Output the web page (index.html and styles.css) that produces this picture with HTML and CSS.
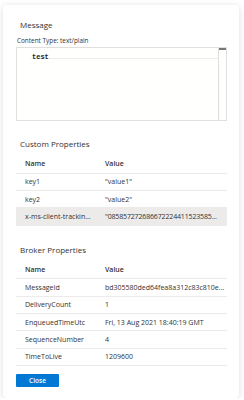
FILE: index.html
```html
<!DOCTYPE html>
<html lang="en">
<head>
    <meta charset="UTF-8">
    <meta name="viewport" content="width=device-width, initial-scale=1.0">
    <title>Message Details</title>
    <link rel="stylesheet" href="styles.css">
</head>
<body>

<div class="panel">
    <div class="section-title">Message</div>
    <div class="content-type">Content Type: text/plain</div>
    <div class="editor">
        <div class="editor-lines">
            <div class="current-line"><span class="code">test</span></div>
        </div>
        <div class="editor-ruler"><div class="ruler-mark"></div></div>
    </div>

    <div class="section-title custom-title">Custom Properties</div>
    <table class="props">
        <tr>
            <th>Name</th>
            <th>Value</th>
        </tr>
        <tr>
            <td>key1</td>
            <td>"value1"</td>
        </tr>
        <tr>
            <td>key2</td>
            <td>"value2"</td>
        </tr>
        <tr class="selected">
            <td>x-ms-client-trackin...</td>
            <td class="tight">"085857272686672224411523585...</td>
        </tr>
    </table>

    <div class="section-title broker-title">Broker Properties</div>
    <table class="props">
        <tr>
            <th>Name</th>
            <th>Value</th>
        </tr>
        <tr>
            <td>MessageId</td>
            <td>bd305580ded64fea8a312c83c810e...</td>
        </tr>
        <tr>
            <td>DeliveryCount</td>
            <td>1</td>
        </tr>
        <tr>
            <td>EnqueuedTimeUtc</td>
            <td>Fri, 13 Aug 2021 18:40:19 GMT</td>
        </tr>
        <tr>
            <td>SequenceNumber</td>
            <td>4</td>
        </tr>
        <tr>
            <td>TimeToLive</td>
            <td>1209600</td>
        </tr>
    </table>

    <button class="close-btn">Close</button>
</div>

</body>
</html>
```

FILE: styles.css
```css
body {
    margin: 0;
    background-color: #ffffff;
    font-family: "Open Sans", Arial, sans-serif;
    color: #323130;
}
.panel {
    margin: 5px 5px 0 3px;
    height: 393px;
    box-sizing: border-box;
    padding: 13px 12px 0 13px;
    background-color: white;
    border-radius: 4px;
    box-shadow: 0 1px 6px rgba(0, 0, 0, 0.14);
}
.section-title {
    font-size: 8px;
    line-height: 14px;
    padding-left: 4px;
}
.content-type {
    margin-top: 3px;
    font-size: 6.4px;
    line-height: 12px;
    padding-left: 1px;
}
.editor {
    height: 74px;
    box-sizing: border-box;
    border: 1px solid #e1dfdd;
    background-color: #fffffe;
    display: flex;
}
.editor-lines {
    flex: 1;
}
.current-line {
    height: 10px;
    border-bottom: 1px solid #eeeeee;
    margin-left: 14px;
    line-height: 10px;
}
.code {
    font-family: "Liberation Mono", monospace;
    font-size: 7px;
    font-weight: bold;
    color: #1e1e1e;
    padding-left: 1px;
}
.editor-ruler {
    width: 7px;
    border-left: 1px solid #dddddd;
}
.ruler-mark {
    height: 2px;
    background-color: #777777;
}
.custom-title {
    margin-top: 16px;
}
.broker-title {
    margin-top: 17px;
}
.props {
    width: 100%;
    margin-top: 4px;
    border-collapse: collapse;
    table-layout: fixed;
    font-size: 7px;
}
.props th,
.props td {
    height: 17.4px;
    padding: 0 2px 0 9px;
    text-align: left;
    white-space: nowrap;
    border-bottom: 1px solid #edebe9;
    box-sizing: border-box;
}
.props th {
    height: 18px;
    font-weight: 600;
}
.props th:first-child,
.props td:first-child {
    width: 81px;
}
.props th:last-child,
.props td:last-child {
    padding-left: 8px;
}
.props td.tight {
    letter-spacing: -0.15px;
}
.props tr.selected td {
    background-color: #edebe9;
    border-bottom-color: #edebe9;
}
.close-btn {
    margin-top: 8px;
    width: 43px;
    height: 13px;
    padding: 0;
    border: none;
    border-radius: 1px;
    background-color: #0078d4;
    color: white;
    font-family: "Open Sans", Arial, sans-serif;
    font-size: 6.5px;
    font-weight: 600;
}
```
